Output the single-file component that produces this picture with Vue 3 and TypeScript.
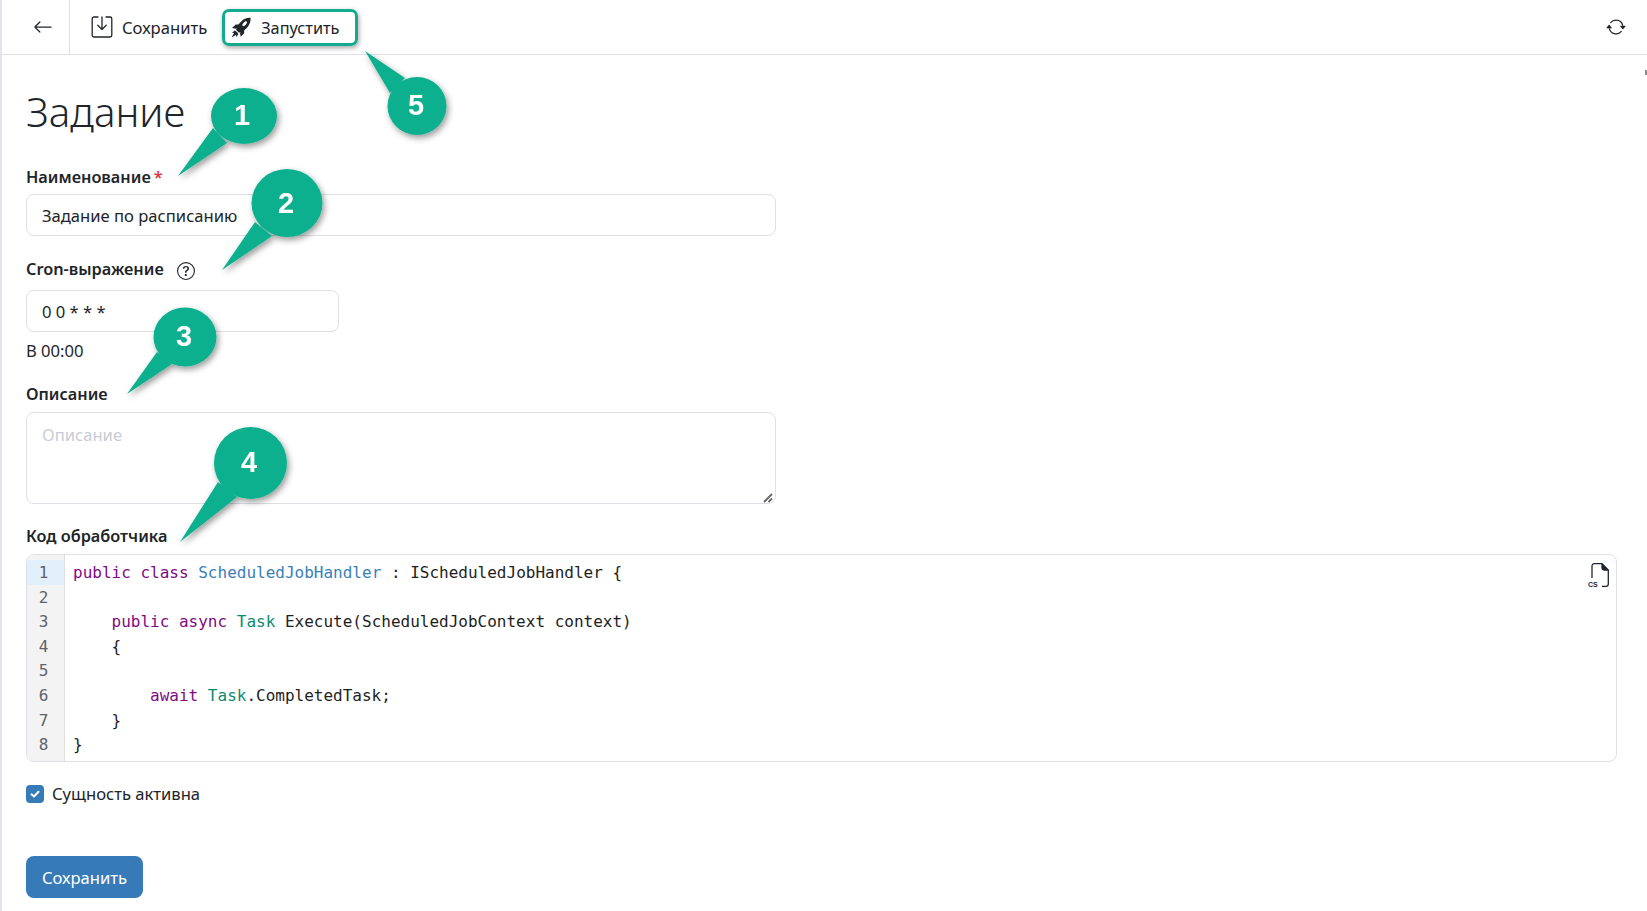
<script setup lang="ts">
type Tok = { t: string; c?: string }
const lines: Tok[][] = [
  [{ t: 'public class ', c: 'kw' }, { t: 'ScheduledJobHandler', c: 'cls' }, { t: ' : IScheduledJobHandler {' }],
  [],
  [{ t: '    public async ', c: 'kw' }, { t: 'Task', c: 'typ' }, { t: ' Execute(ScheduledJobContext context)' }],
  [{ t: '    {' }],
  [],
  [{ t: '        await ', c: 'kw' }, { t: 'Task', c: 'typ' }, { t: '.CompletedTask;' }],
  [{ t: '    }' }],
  [{ t: '}' }],
]
const callouts = [
  { n: 1, d: 'M213 128 L178 176 L227 143 Z', cx: 244, cy: 116, rx: 33, ry: 28, tx: 242, ty: 125 },
  { n: 2, d: 'M255 222 L222 270 L272 236 Z', cx: 287, cy: 203, rx: 35.5, ry: 34, tx: 286, ty: 213 },
  { n: 3, d: 'M157 352 L127 394 L172 364 Z', cx: 185, cy: 337, rx: 31.5, ry: 29.5, tx: 184, ty: 346 },
  { n: 4, d: 'M218 482 L180 542 L237 497 Z', cx: 250.5, cy: 463, rx: 36.5, ry: 36, tx: 249, ty: 472 },
  { n: 5, d: 'M405 78 L365 51 L390 93 Z', cx: 417, cy: 106, rx: 29.5, ry: 29, tx: 416, ty: 115 },
]
</script>

<template>
  <div class="page">
    <header class="toolbar">
      <button class="back" type="button" aria-label="Назад">
        <svg width="20" height="20" viewBox="0 0 16 16" fill="currentColor"><path d="M15 8a.5.5 0 0 0-.5-.5H2.707l3.147-3.146a.5.5 0 1 0-.708-.708l-4 4a.5.5 0 0 0 0 .708l4 4a.5.5 0 0 0 .708-.708L2.707 8.5H14.5A.5.5 0 0 0 15 8z"/></svg>
      </button>
      <div class="actions">
        <button class="tool save" type="button">
          <svg width="22" height="24" viewBox="0 0 22 24" fill="none" stroke="currentColor" stroke-width="1.3" stroke-linecap="round" stroke-linejoin="round"><path d="M7 2H3a1.800 1.800 0 0 0-1.800 1.800v16.400A1.800 1.800 0 0 0 3 22h16a1.800 1.800 0 0 0 1.800-1.800V3.800A1.800 1.800 0 0 0 19 2h-4"/><path d="M11 2v12.500M6.800 10.300l4.200 4.200 4.200-4.200"/></svg>
          <span>Сохранить</span>
        </button>
        <button class="tool run" type="button">
          <svg width="20" height="21" viewBox="0 0 20 21" fill="currentColor"><path d="M19.600.8c-3.800-.2-7 1-9.400 3.600L7.400 7.600 4.800 7.400 1 11l3.800.8.900-.7-.7 1.700 3 3 1.700-.7-.7.9.7 3.800 3.600-3.800-.2-2.600 3.200-2.800C18.600 7.800 19.800 4.600 19.600.8z"/><ellipse cx="13.700" cy="6.700" rx="1.500" ry="3" transform="rotate(45 13.700 6.700)" fill="#fff"/><path d="M3.800 13.600.8 16l2.400-.2-2.600 4.600 4.600-2.600-.2 2.400 2.400-3-1.400-2.200z"/></svg>
          <span>Запустить</span>
        </button>
      </div>
      <button class="refresh" type="button" aria-label="Обновить">
        <svg width="20" height="20" viewBox="0 0 16 16" fill="currentColor"><path d="M11.534 7h3.932a.25.25 0 0 1 .192.41l-1.966 2.36a.25.25 0 0 1-.384 0l-1.966-2.36a.25.25 0 0 1 .192-.41zm-11 2h3.932a.25.25 0 0 0 .192-.41L2.692 6.230a.25.25 0 0 0-.384 0L.342 8.590A.25.25 0 0 0 .534 9z"/><path d="M8 3c-1.552 0-2.940.707-3.857 1.818a.5.5 0 1 1-.771-.636A6.002 6.002 0 0 1 13.917 7H12.900A5.002 5.002 0 0 0 8 3zM3.100 9a5.002 5.002 0 0 0 8.757 2.182.5.5 0 1 1 .771.636A6.002 6.002 0 0 1 2.083 9H3.100z"/></svg>
      </button>
    </header>

    <main class="content">
      <h1 class="title">Задание</h1>

      <label class="label first">Наименование<span class="req">*</span></label>
      <div class="input wide">Задание по расписанию</div>

      <label class="label cron">Cron-выражение
        <svg class="help" width="18" height="18" viewBox="0 0 16 16" fill="currentColor"><path d="M8 15A7 7 0 1 1 8 1a7 7 0 0 1 0 14zm0 1A8 8 0 1 0 8 0a8 8 0 0 0 0 16z"/><path d="M5.255 5.786a.237.237 0 0 0 .241.247h.825c.138 0 .248-.113.266-.250.090-.656.540-1.134 1.342-1.134.686 0 1.314.343 1.314 1.168 0 .635-.374.927-.965 1.371-.673.489-1.206 1.060-1.168 1.987l.003.217a.25.25 0 0 0 .25.246h.811a.25.25 0 0 0 .25-.250v-.105c0-.718.273-.927 1.010-1.486.609-.463 1.244-.977 1.244-2.056 0-1.511-1.276-2.241-2.673-2.241-1.267 0-2.655.590-2.750 2.286zm1.557 5.763c0 .533.425.927 1.010.927.609 0 1.028-.394 1.028-.927 0-.552-.420-.940-1.029-.940-.584 0-1.009.388-1.009.940z"/></svg>
      </label>
      <div class="input narrow">0 0 * * *</div>
      <div class="hint">В 00:00</div>

      <label class="label desc">Описание</label>
      <div class="textarea">
        <span class="placeholder">Описание</span>
        <svg class="grip" width="10" height="10" viewBox="0 0 10 10" stroke="#666" stroke-width="1.800" fill="none"><path d="M1 9 9 1M5.500 9 9 5.500"/></svg>
      </div>

      <label class="label code-label">Код обработчика</label>
      <div class="editor">
        <div class="gutter">
          <div v-for="(_, i) in lines" :key="i" class="num" :class="{ active: i === 0 }">{{ i + 1 }}</div>
        </div>
        <div class="code">
          <div v-for="(line, i) in lines" :key="i" class="line"><span v-for="(tok, j) in line" :key="j" :class="tok.c">{{ tok.t }}</span></div>
        </div>
        <div class="file-icon">
          <svg width="18" height="24" viewBox="0 0 18 24" fill="none" stroke="currentColor" stroke-width="1.300"><path d="M1 15V3a2.300 2.300 0 0 1 2.300-2.300H11L17.300 7v14a2.300 2.300 0 0 1-2.300 2.300h-4"/><path d="M11 .7v3.800A2.500 2.500 0 0 0 13.500 7h3.800" fill="currentColor"/></svg>
          <span>CS</span>
        </div>
      </div>

      <div class="check">
        <span class="box">
          <svg width="12" height="12" viewBox="0 0 12 12" fill="none" stroke="#fff" stroke-width="2" stroke-linecap="round" stroke-linejoin="round"><path d="M2.500 6.300 5 8.500l4.500-4.800"/></svg>
        </span>
        <span>Сущность активна</span>
      </div>

      <button class="submit" type="button">Сохранить</button>
    </main>

    <span class="scroll-mark"></span>

    <svg class="callouts" width="1647" height="911" viewBox="0 0 1647 911">
      <defs>
        <filter id="cs" x="-30%" y="-30%" width="160%" height="160%">
          <feDropShadow dx="2" dy="3" stdDeviation="3" flood-color="#000" flood-opacity="0.4"/>
        </filter>
      </defs>
      <g v-for="c in callouts" :key="c.n" filter="url(#cs)">
        <path :d="c.d" fill="#0ab08e"/>
        <ellipse :cx="c.cx" :cy="c.cy" :rx="c.rx" :ry="c.ry" fill="#0ab08e"/>
        <text :x="c.tx" :y="c.ty" class="digit" text-anchor="middle">{{ c.n }}</text>
      </g>
    </svg>
  </div>
</template>

<style scoped>
.page {
  position: relative;
  width: 1647px;
  height: 911px;
  overflow: hidden;
  background: #fff;
  color: #212529;
  font-family: "Noto Sans", "Open Sans", sans-serif;
  font-size: 16.6px;
  box-sizing: border-box;
  border-left: 2px solid #e4e4ec;
}
button {
  font: inherit;
  color: inherit;
  background: none;
  border: 0;
  padding: 0;
}
.toolbar {
  display: flex;
  align-items: center;
  height: 55px;
  box-sizing: border-box;
  border-bottom: 1px solid #dedee6;
}
.back {
  width: 68px;
  height: 54px;
  display: flex;
  align-items: center;
  justify-content: center;
  padding-left: 15px;
  box-sizing: border-box;
  border-right: 1px solid #dedee6;
}
.actions {
  display: flex;
  align-items: center;
  flex: 1;
  padding-left: 21px;
}
.tool {
  display: flex;
  align-items: center;
}
.save {
  gap: 9px;
  margin-right: 15px;
}
.run {
  box-sizing: border-box;
  width: 136px;
  height: 37px;
  margin-top: 1px;
  padding-left: 6px;
  gap: 10px;
  font-size: 16.3px;
  border: 3px solid #13ab90;
  border-radius: 7px;
  box-shadow: 1px 2px 5px rgba(0, 0, 0, 0.35);
}
.refresh {
  display: flex;
  margin-right: 21px;
}
.content {
  padding: 0 30px 0 24px;
}
.title {
  margin: 29px 0 0;
  height: 55px;
  font-size: 40.3px;
  line-height: 55px;
  font-weight: 300;
}
.label {
  display: block;
  font-size: 16.3px;
  font-weight: 600;
  line-height: 22px;
}
.first {
  margin-top: 27px;
  margin-bottom: 6px;
}
.req {
  color: #dc3545;
  margin-left: 3px;
}
.input {
  box-sizing: border-box;
  height: 42px;
  padding: 0 15px;
  line-height: 42px;
  border: 1px solid #dfdfe8;
  border-radius: 8px;
}
.wide { width: 750px; }
.narrow { width: 313px; }
.cron {
  display: flex;
  align-items: center;
  gap: 13px;
  margin-top: 22px;
  margin-bottom: 10px;
}
.help { margin-top: 3px; }
.hint {
  margin-top: 7px;
  line-height: 24px;
}
.desc {
  margin-top: 20px;
  margin-bottom: 7px;
}
.textarea {
  position: relative;
  box-sizing: border-box;
  width: 750px;
  height: 92px;
  padding: 10px 15px;
  border: 1px solid #dfdfe8;
  border-radius: 8px;
  line-height: 24px;
}
.placeholder { color: #c9ccd6; }
.grip {
  position: absolute;
  right: 2px;
  bottom: 0;
}
.code-label {
  margin-top: 21px;
  margin-bottom: 7px;
}
.editor {
  position: relative;
  display: flex;
  box-sizing: border-box;
  width: 1591px;
  height: 208px;
  padding: 0;
  border: 1px solid #dfdfe8;
  border-radius: 8px;
  overflow: hidden;
  font-family: "DejaVu Sans Mono", "Liberation Mono", monospace;
  font-size: 16px;
  line-height: 24.6px;
}
.gutter {
  width: 37px;
  padding-top: 5px;
  background: #f3f3f3;
  border-right: 1px solid #dedede;
  color: #5f6368;
  text-align: center;
  flex: none;
}
.num {
  height: 24.6px;
  line-height: 26.6px;
  padding-right: 4px;
}
.num.active { background: #e2f0fb; }
.code {
  padding: 6px 0 0 8px;
  color: #1e1e1e;
}
.line {
  height: 24.6px;
  white-space: pre;
}
.kw { color: #7f0a84; }
.cls { color: #3a7fb8; }
.typ { color: #0a8a70; }
.file-icon {
  position: absolute;
  right: 7px;
  top: 8px;
  width: 21px;
  height: 25px;
  color: #1f2530;
}
.file-icon svg {
  position: absolute;
  right: 0;
  top: 0;
}
.file-icon span {
  position: absolute;
  left: 0;
  bottom: 0;
  font: 700 7px/7px "Liberation Sans", sans-serif;
}
.check {
  display: flex;
  align-items: center;
  gap: 8px;
  margin-top: 20px;
  line-height: 24px;
}
.box {
  width: 18px;
  height: 18px;
  border-radius: 4px;
  background: #377ab8;
  display: flex;
  align-items: center;
  justify-content: center;
}
.submit {
  display: block;
  margin-top: 50px;
  width: 117px;
  height: 42px;
  border-radius: 8px;
  background: #377ab8;
  color: #fff;
}
.scroll-mark {
  position: absolute;
  right: 0;
  top: 70px;
  width: 2px;
  height: 5px;
  background: #8a8a8a;
}
.callouts {
  position: absolute;
  left: -2px;
  top: 0;
  pointer-events: none;
}
.digit {
  font: 700 29px "Liberation Sans", Arial, sans-serif;
  fill: #fff;
}
</style>
